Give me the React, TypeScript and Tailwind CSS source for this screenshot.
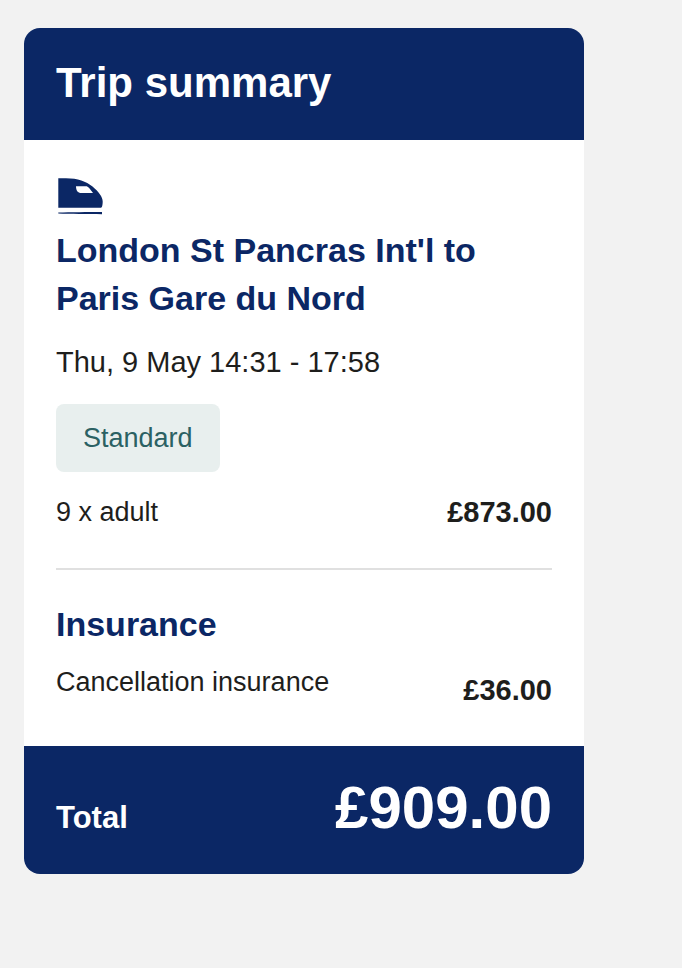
const journey = {
  route: "London St Pancras Int'l to Paris Gare du Nord",
  time: 'Thu, 9 May 14:31 - 17:58',
  fareClass: 'Standard',
  passengers: '9 x adult',
  price: '£873.00',
};

const insurance = { name: 'Cancellation insurance', price: '£36.00' };

function TrainIcon() {
  return (
    <svg width="48" height="40" viewBox="0 0 48 40" fill="currentColor" aria-hidden="true">
      <path
        fillRule="evenodd"
        d="M2.300 2.300H10C22 2.300 30 5.500 36.500 10.500C42.500 15.500 46.700 21 46.700 25.500C46.700 29 46 31.700 45 31.700H2.300ZM20 10.300H30C32 10.300 34 13 37 16.900H24.500C21.500 16.900 20 14 20 10.300Z"
      />
      <path d="M2.300 36.600C14 36 32 35.900 46 35.900V38.200C32 38.200 14 38 2.300 37.600Z" />
    </svg>
  );
}

export default function App() {
  return (
    <main className="min-h-screen bg-[#f2f2f2] py-7 pl-6 pr-[98px] font-['Liberation_Sans',Arial,sans-serif] text-[#1e1e1c]">
      <section className="overflow-hidden rounded-2xl bg-white">
        <header className="bg-[#0b2765] px-8 pt-[27px] pb-[29px] text-white">
          <h1 className="text-[42px] leading-14 font-bold">Trip summary</h1>
        </header>

        <div className="px-8 py-9">
          <div className="text-[#0b2765]">
            <TrainIcon />
          </div>
          <h2 className="mt-[10px] text-[34px] leading-12 font-bold text-[#0b2765]">{journey.route}</h2>
          <p className="mt-4 text-[29px] leading-12">{journey.time}</p>
          <span className="mt-[18px] inline-block rounded-lg bg-[#e8efee] px-[27px] py-4 text-[27px] leading-9 text-[#2b6163]">
            {journey.fareClass}
          </span>
          <div className="mt-5 flex justify-between text-[27px] leading-10">
            <span>{journey.passengers}</span>
            <strong className="text-[29px] font-bold">{journey.price}</strong>
          </div>

          <hr className="mt-9 mb-[30px] border-t-2 border-[#e0e0e0]" />

          <h2 className="text-[34px] leading-12 font-bold text-[#0b2765]">Insurance</h2>
          <div className="mt-[14px] flex justify-between text-[27px] leading-10">
            <span>{insurance.name}</span>
            <strong className="pt-2 text-[29px] font-bold">{insurance.price}</strong>
          </div>
        </div>

        <footer className="flex items-baseline justify-between bg-[#0b2765] px-8 pt-[26px] pb-[30px] text-white">
          <span className="text-[31px] font-bold">Total</span>
          <strong className="text-[60px] leading-18 font-bold">£909.00</strong>
        </footer>
      </section>
    </main>
  );
}
